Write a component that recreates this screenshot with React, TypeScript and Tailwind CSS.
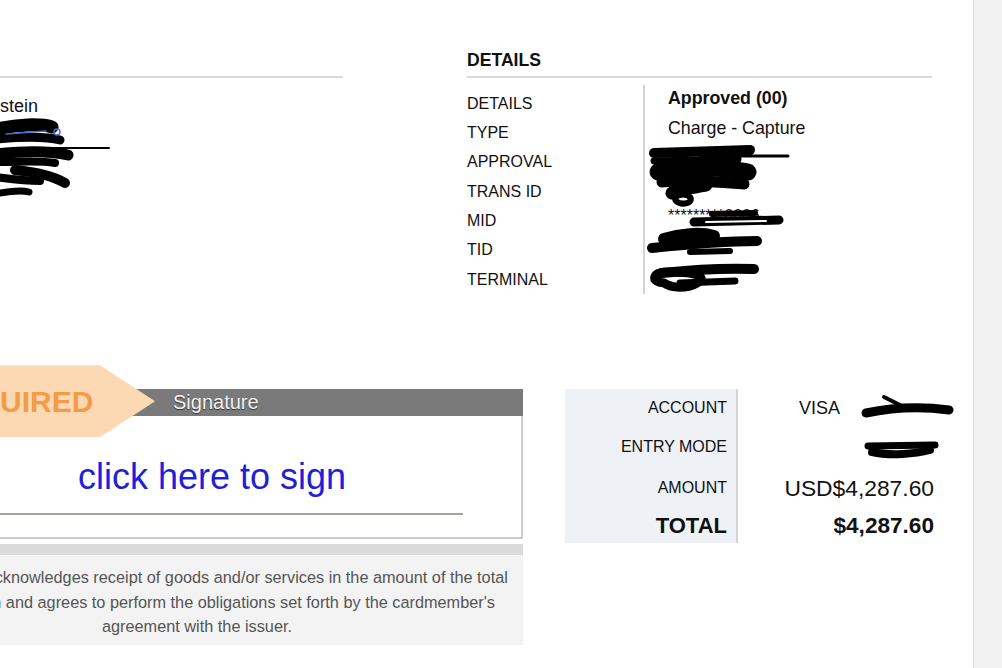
import React from "react";

const detailRows = ["DETAILS", "TYPE", "APPROVAL", "TRANS ID", "MID", "TID", "TERMINAL"];

function Redactions() {
  // hand-drawn marker strokes covering private values
  return (
    <svg
      className="pointer-events-none absolute left-0 top-0"
      width="973"
      height="668"
      viewBox="0 0 973 668"
      fill="none"
      stroke="#000"
      strokeLinecap="round"
      strokeLinejoin="round"
    >
      {/* customer block */}
      <path d="M-5 129 C20 125 38 123 52 127" strokeWidth="13" />
      <path d="M-5 139 C20 137 45 136 60 140" strokeWidth="9" />
      <path d="M6 134 C20 133 34 132 46 131" stroke="#3f6fd8" strokeWidth="1.4" />
      <circle cx="57" cy="132" r="3" stroke="#3f6fd8" strokeWidth="1.4" />
      <path d="M32 148 L109 148" strokeWidth="2" />
      <path d="M-5 154 C25 151 50 151 68 155" strokeWidth="11" />
      <path d="M-5 162 C20 162 40 160 55 163" strokeWidth="8" />
      <path d="M15 170 C35 172 55 177 65 183" strokeWidth="10" />
      <path d="M-5 177 C10 179 25 181 40 181" strokeWidth="8" />
      <path d="M-5 194 C10 191 22 190 29 192" strokeWidth="7" />

      {/* approval / trans id */}
      <path d="M654 153 L750 150" strokeWidth="10" />
      <path d="M700 156 L788 156" strokeWidth="3" />
      <path d="M654 161 L738 159" strokeWidth="7" />
      <path d="M658 172 C690 167 720 166 748 172" strokeWidth="17" />
      <path d="M662 182 C690 179 720 182 744 184" strokeWidth="11" />
      <path d="M672 193 C682 188 698 187 706 185" strokeWidth="13" />
      <path d="M676 201 C672 196 684 192 690 197 C694 203 682 206 676 201" strokeWidth="6" />

      {/* mid */}
      <path d="M694 222 L779 220" strokeWidth="9" />
      <path d="M712 214 L755 213" strokeWidth="6" />
      <path d="M706 222 L766 221" stroke="#fff" strokeWidth="2" />

      {/* tid / terminal */}
      <path d="M652 248 C690 244 730 241 757 241" strokeWidth="10" />
      <path d="M664 239 C680 234 700 232 714 236" strokeWidth="12" />
      <path d="M690 252 L730 251" strokeWidth="6" />
      <path d="M662 273 C690 270 730 268 754 269" strokeWidth="10" />
      <path d="M664 283 C650 282 652 272 668 272 C700 272 712 278 690 286 C680 288 670 287 664 283" strokeWidth="9" />
      <path d="M680 283 L735 281" strokeWidth="7" />

      {/* account / entry mode */}
      <path d="M866 413 C890 408 920 406 949 410" strokeWidth="9" />
      <path d="M884 397 L904 407" strokeWidth="4" />
      <path d="M868 446 L935 445" strokeWidth="7" />
      <path d="M872 452 C890 456 915 454 930 450" strokeWidth="8" />
    </svg>
  );
}

export default function App() {
  return (
    <div className="flex h-[668px] w-[1002px] overflow-hidden bg-white font-['Liberation_Sans',Arial,sans-serif] text-[#111]">
      <div className="relative w-[973px] shrink-0 overflow-hidden">
        {/* ================= TOP ================= */}
        <div className="flex pt-[50px]">
          <div className="w-[343px] shrink-0">
            <div className="h-[20px]" />
            <div className="mt-[6px] h-[2px] bg-[#d9d9d9]" />
            <p className="mt-[17px] text-[18px] leading-[22px]">stein</p>
          </div>

          <div className="ml-[124px] w-[465px] shrink-0">
            <h2 className="h-[20px] text-[17.6px] font-bold leading-[20px]">DETAILS</h2>
            <div className="mt-[6px] h-[2px] bg-[#d9d9d9]" />

            <div className="mt-[7px] flex">
              <div className="w-[178px] border-r-2 border-[#d4d4d4] pt-[4px]">
                {detailRows.map((label) => (
                  <div key={label} className="flex h-[29.33px] items-center text-[16px]">
                    {label}
                  </div>
                ))}
              </div>
              <div className="-mt-[1px] pl-[23px] text-[17.8px]">
                <div className="flex h-[29.33px] items-center font-bold">Approved (00)</div>
                <div className="flex h-[29.33px] items-center">Charge - Capture</div>
                <div className="h-[29.33px]" />
                <div className="h-[29.33px]" />
                <div className="flex h-[29.33px] items-center text-[16px]">*********6666</div>
              </div>
            </div>
          </div>
        </div>

        {/* ================= BOTTOM ================= */}
        <div className="mt-[95px] flex items-start">
          {/* SIGNATURE */}
          <div className="relative -ml-[129px] w-[652px] shrink-0">
            <div className="h-[27px] bg-[#7a7a7a] pl-[302px] text-[20px] leading-[27px] text-[#f2f2f2] [text-shadow:0_1px_1px_#333]">
              Signature
            </div>

            <div className="absolute -top-[24px] left-[40px] flex h-[72px] w-[244px] items-center bg-[#fcd8b3] pl-[24px] [clip-path:polygon(0_0,189px_0,100%_50%,189px_100%,0_100%)]">
              <span className="text-[30px] font-bold text-[#f29d46]">REQUIRED</span>
            </div>

            <div className="h-[123px] border-2 border-t-0 border-[#cdcdcd] bg-white">
              <div className="pl-[30px] pt-[41px] text-center text-[36px] leading-[40px] text-[#1f1fd6]">
                click here to sign
              </div>
              <div className="ml-[90px] mt-[16px] h-[2px] w-[500px] bg-[#a6a59d]" />
            </div>

            <div className="mt-[5px] h-[11px] bg-[#dadada]" />
            <div className="h-[90px] bg-[#f3f3f3] pt-[10px] text-center text-[16.3px] leading-[24.5px] text-[#555]">
              Cardmember acknowledges receipt of goods and/or services in the amount of the total
              <br />
              shown hereon and agrees to perform the obligations set forth by the cardmember's
              <br />
              agreement with the issuer.
            </div>
          </div>

          {/* TOTALS */}
          <div className="ml-[42px] grid grid-cols-[173px_196px]">
            <div className="flex h-[38px] items-center justify-end border-r-2 border-[#d4d4d4] bg-[#eef1f5] pr-[9px] text-[16px]">
              ACCOUNT
            </div>
            <div className="flex h-[38px] items-center justify-end pr-[94px] text-[18px]">VISA</div>

            <div className="flex h-[40px] items-center justify-end border-r-2 border-[#d4d4d4] bg-[#eef1f5] pr-[9px] text-[16px]">
              ENTRY MODE
            </div>
            <div className="h-[40px]" />

            <div className="flex h-[41px] items-center justify-end border-r-2 border-[#d4d4d4] bg-[#eef1f5] pr-[9px] text-[16px]">
              AMOUNT
            </div>
            <div className="flex h-[41px] items-center justify-end text-[22.8px]">USD$4,287.60</div>

            <div className="flex h-[35px] items-center justify-end border-r-2 border-[#d4d4d4] bg-[#eef1f5] pr-[9px] text-[22px] font-bold">
              TOTAL
            </div>
            <div className="flex h-[35px] items-center justify-end text-[22.6px] font-bold">$4,287.60</div>
          </div>
        </div>

        <Redactions />
      </div>

      {/* scrollbar track */}
      <div className="h-full flex-1 border-l border-[#dcdcdc] bg-[#f2f2f2]" />
    </div>
  );
}
